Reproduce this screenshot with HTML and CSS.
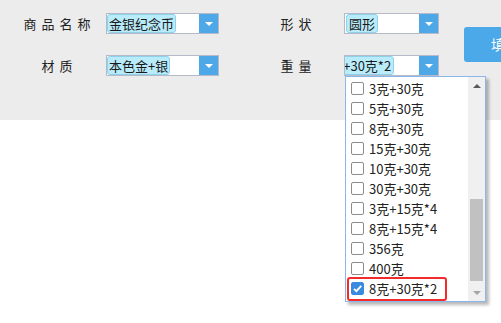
FILE: index.html
```html
<!DOCTYPE html>
<html lang="zh-CN">
<head>
    <meta charset="UTF-8">
    <meta name="viewport" content="width=device-width, initial-scale=1.0">
    <title>商品信息</title>
    <link rel="stylesheet" href="styles.css">
</head>
<body>
    <div class="toolbar">
        <!-- 第一行 -->
        <span class="label">商品名称</span>
        <div class="combo">
            <div class="value"><span class="tag">金银纪念币</span></div>
            <span class="arrow"></span>
        </div>
        <span class="label label-right">形状</span>
        <div class="combo combo-small">
            <div class="value"><span class="tag">圆形</span></div>
            <span class="arrow"></span>
        </div>
        <button class="btn">填写</button>

        <!-- 第二行 -->
        <span class="label">材质</span>
        <div class="combo">
            <div class="value"><span class="tag">本色金+银</span></div>
            <span class="arrow"></span>
        </div>
        <span class="label label-right">重量</span>
        <div class="combo combo-small combo-open">
            <div class="value"><span class="tag tag-scrolled">8克+30克*2</span></div>
            <span class="arrow"></span>

            <div class="dropdown">
                <ul class="list">
                    <li class="item"><span class="check"></span>3克+30克</li>
                    <li class="item"><span class="check"></span>5克+30克</li>
                    <li class="item"><span class="check"></span>8克+30克</li>
                    <li class="item"><span class="check"></span>15克+30克</li>
                    <li class="item"><span class="check"></span>10克+30克</li>
                    <li class="item"><span class="check"></span>30克+30克</li>
                    <li class="item"><span class="check"></span>3克+15克*4</li>
                    <li class="item"><span class="check"></span>8克+15克*4</li>
                    <li class="item"><span class="check"></span>356克</li>
                    <li class="item"><span class="check"></span>400克</li>
                    <li class="item item-marked">
                        <span class="check checked">
                            <svg width="13" height="13" viewBox="0 0 13 13"><path d="M3 6.8 L5.4 9.2 L10.2 3.8" fill="none" stroke="#fff" stroke-width="1.8"/></svg>
                        </span>8克+30克*2
                    </li>
                </ul>
                <div class="scrollbar">
                    <div class="sb-btn"><span class="tri-up"></span></div>
                    <div class="sb-track"><div class="sb-thumb"></div></div>
                    <div class="sb-btn"><span class="tri-down"></span></div>
                </div>
            </div>
        </div>
    </div>
    <div class="content"></div>
</body>
</html>
```

FILE: styles.css
```css
html, body {
    margin: 0;
    overflow: hidden;
}
body {
    font-family: "Noto Sans CJK SC", "Noto Sans", sans-serif;
    font-size: 13px;
    color: #222;
    background-color: #fff;
    width: 501px;
    height: 323px;
}
.toolbar {
    background-color: #ececec;
    height: 120px;
    box-sizing: border-box;
    padding: 13px 0 0 8px;
    display: grid;
    grid-template-columns: 98px 113px 125px 95px 1fr;
    grid-template-rows: 21px 21px;
    row-gap: 21px;
    align-items: center;
}
.label {
    text-align: center;
    letter-spacing: 5px;
    padding-left: 5px;
    line-height: 21px;
    white-space: nowrap;
}
.label-right {
    padding-left: 34px;
}
.combo {
    position: relative;
    height: 21px;
    box-sizing: border-box;
    border: 1px solid #b6b9c8;
    background-color: #fff;
    display: flex;
}
.value {
    flex: 1;
    overflow: hidden;
    display: flex;
}
.tag {
    height: 19px;
    box-sizing: border-box;
    line-height: 17px;
    padding: 0 1px;
    background-color: #b9ecfa;
    border: 1px solid #8fd0ea;
    border-radius: 3px;
    white-space: nowrap;
    color: #1a1a1a;
}
.combo-small .tag {
    padding: 0 2px;
    margin-left: 1px;
}
.combo-small .tag-scrolled {
    margin-left: -25px;
}
.arrow {
    width: 19px;
    background-color: #4ea8e8;
    display: flex;
    justify-content: center;
    align-items: center;
}
.arrow::after {
    content: "";
    border-left: 4px solid transparent;
    border-right: 4px solid transparent;
    border-top: 4px solid #fff;
    margin-top: 1px;
}
.btn {
    grid-column: 5;
    grid-row: 1 / span 2;
    align-self: center;
    justify-self: start;
    margin-left: 25px;
    margin-top: -1px;
    width: 90px;
    height: 35px;
    border: none;
    border-radius: 3px;
    background-color: #4ba8e9;
    color: #fff;
    font-family: inherit;
    font-size: 14px;
    text-align: left;
    padding-left: 27px;
    white-space: nowrap;
}
.dropdown {
    position: absolute;
    top: 20px;
    left: 0px;
    width: 141px;
    height: 226px;
    box-sizing: border-box;
    border: 1px solid #8ab6ea;
    background-color: #fff;
    box-shadow: 3px 3px 3px rgba(0, 0, 0, 0.28);
    display: flex;
    z-index: 2;
}
.list {
    flex: 1;
    list-style: none;
    margin: 0;
    padding: 1px 0 0 0;
}
.item {
    position: relative;
    height: 20px;
    display: flex;
    align-items: center;
    padding-left: 5px;
    white-space: nowrap;
}
.check {
    width: 13px;
    height: 13px;
    box-sizing: border-box;
    border: 1px solid #8c8c8c;
    border-radius: 2px;
    margin-right: 5px;
    background-color: #fff;
    display: flex;
}
.check.checked {
    border-color: #3a8be0;
    background-color: #3a8be0;
}
.check svg {
    margin: -1px;
}
.item-marked::after {
    content: "";
    position: absolute;
    left: 1px;
    top: -1px;
    width: 100px;
    height: 24px;
    box-sizing: border-box;
    border: 2px solid #f52a2a;
    border-radius: 3px;
}
.scrollbar {
    width: 17px;
    background-color: #f0f0f0;
    display: flex;
    flex-direction: column;
}
.sb-btn {
    height: 17px;
    display: flex;
    justify-content: center;
    align-items: center;
}
.tri-up {
    border-left: 4px solid transparent;
    border-right: 4px solid transparent;
    border-bottom: 4px solid #5a5a5a;
}
.tri-down {
    border-left: 4px solid transparent;
    border-right: 4px solid transparent;
    border-top: 4px solid #a6a6a6;
}
.sb-track {
    flex: 1;
    display: flex;
    flex-direction: column;
    justify-content: flex-end;
    padding: 0 2px 3px 2px;
}
.sb-thumb {
    height: 82px;
    background-color: #c1c1c1;
}
.content {
    height: 203px;
}
```
